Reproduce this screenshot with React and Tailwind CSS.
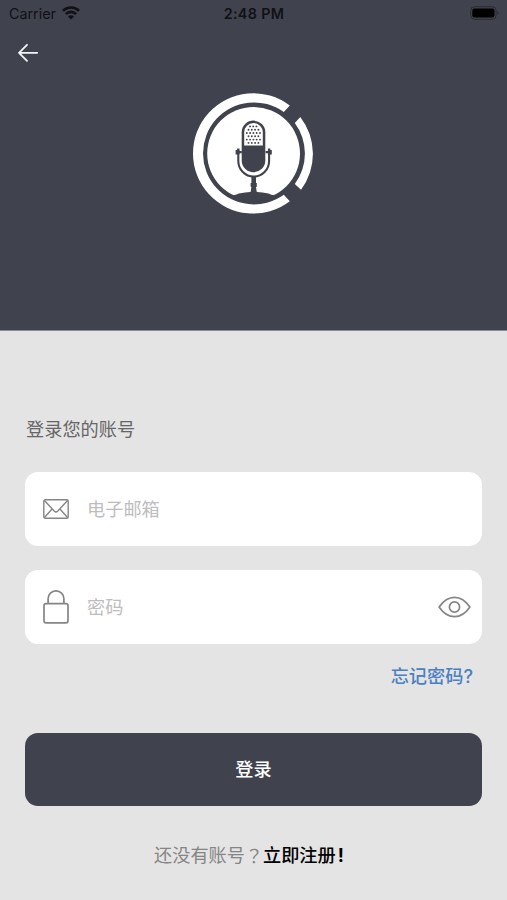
import React from 'react';

const GRILLE_ROWS = [
  { y: 126.4, xs: [249.3, 252.5, 255.7] },
  { y: 129.7, xs: [247.8, 251.1, 254.4, 257.7] },
  { y: 133, xs: [246.1, 249.4, 252.7, 256, 259.3] },
  { y: 136.3, xs: [247.8, 251.1, 254.4, 257.7] },
  { y: 139.6, xs: [246.1, 249.4, 252.7, 256, 259.3] },
  { y: 142.9, xs: [247.8, 251.1, 254.4, 257.7] },
];

function StatusBar() {
  return (
    <div className="flex h-7 items-center justify-between pl-[9px] pr-2 text-[#101116]">
      <div className="flex w-40 items-center gap-[6px]">
        <span className="text-[14.3px] leading-none">Carrier</span>
        <svg width="18" height="14" viewBox="0 0 18 14" fill="none" stroke="currentColor" strokeWidth="2.7" className="-mt-px">
          <path d="M0.9 4.9a11.4 11.4 0 0 1 16.2 0" />
          <path d="M3.9 8.1a7.1 7.1 0 0 1 10.2 0" />
          <path d="M9 13.6 6 10.5a4.2 4.2 0 0 1 6 0Z" fill="currentColor" stroke="none" />
        </svg>
      </div>
      <span className="text-[14.3px] font-semibold leading-none tracking-[0.35px]">2:48 PM</span>
      <div className="flex w-40 justify-end">
        <svg width="29" height="14" viewBox="0 0 29 14" className="-mt-[2px]">
          <rect x="0.7" y="0.7" width="25.4" height="12.6" rx="3.8" fill="none" stroke="#292b33" strokeWidth="1" />
          <rect x="2.3" y="2.4" width="22.2" height="9.2" rx="2.3" fill="#000" />
          <path d="M27.5 5v4q1.2-.5 1.2-2t-1.2-2Z" fill="#292b33" />
        </svg>
      </div>
    </div>
  );
}

function Logo() {
  return (
    <svg width="140" height="140" viewBox="182.6 84 140 140" className="ml-[183px]">
      {/* Outer ring, split in two pieces */}
      <path
        d="M289.4 105.6A60.2 60.2 0 1 0 289.4 201.2L283.4 194.8A51 51 0 1 1 283.4 112Z"
        fill="#fff"
      />
      <path
        d="M299.9 117A60.2 60.2 0 0 1 300.6 189.8L294.4 184A51 51 0 0 0 294.4 123Z"
        fill="#fff"
      />
      <circle cx="253.2" cy="153.4" r="46.4" fill="#fff" />

      {/* Base and stem */}
      <g fill="#40424d">
        <path d="M231.5 195.6Q236 195 238.5 193.6Q245 192 250 191.9H256.6Q262 192 268 193.6Q270.5 195 275 195.6Q265 202 253.3 202Q241 202 231.5 195.6Z" />
        <path d="M251 176h4.6v7h.8v3.4l-.8.8.9 5.2h-6.4l.9-5.2-.8-.8V183h.8Z" />
        <path d="M235.2 150h2.2v1h4v2.2h-4v1.4H235.2ZM271.4 150h-2.2v1h-4v2.2h4v1.4h2.2Z" />
        <path d="M236.7 148.4h2.4v6h-2.4ZM267.5 148.4h2.4v6h-2.4Z" />
      </g>
      <path
        d="M237.9 150V161a15.4 15.6 0 0 0 30.8 0V150"
        fill="none"
        stroke="#40424d"
        strokeWidth="2.1"
      />

      {/* Capsule */}
      <path
        d="M241.3 132.2a11.8 11.6 0 0 1 23.6 0V160.6a11.8 11.6 0 0 1-23.6 0Z"
        fill="#40424d"
      />
      <path d="M243.8 132.2a9.3 9.2 0 0 1 18.6 0V145.6H243.8Z" fill="#fff" />
      {GRILLE_ROWS.map((row) =>
        row.xs.map((x) => <circle key={`${row.y}-${x}`} cx={x + 0.3} cy={row.y} r="0.95" fill="#40424d" />)
      )}
    </svg>
  );
}

function MailIcon() {
  return (
    <svg width="26" height="20" viewBox="0 0 26 20" fill="none" stroke="#858585" strokeWidth="1.4">
      <rect x="0.8" y="0.8" width="24.4" height="18.4" rx="1.5" />
      <path d="M1.2 1.3 11.4 12.2q1.6 1.4 3.2 0L24.8 1.3M1.2 18.7 9.3 9.8M24.8 18.7 16.7 9.8" />
    </svg>
  );
}

function LockIcon() {
  return (
    <svg width="26" height="34" viewBox="0 0 26 34" fill="none" stroke="#858585" strokeWidth="1.7">
      <rect x="1" y="13.6" width="24" height="19.3" rx="2.2" />
      <path d="M5.1 13.6V8.8a7.9 7.9 0 0 1 15.8 0v4.8" />
    </svg>
  );
}

function EyeIcon() {
  return (
    <svg width="33" height="22" viewBox="0 0 33 22" fill="none" stroke="#858585" strokeWidth="1.7" strokeLinejoin="round">
      <path d="M1.1 11C5.2 5 10.4 1.3 16.5 1.3S27.8 5 31.9 11C27.8 17 22.6 20.7 16.5 20.7S5.2 17 1.1 11Z" />
      <circle cx="16.5" cy="11" r="5.1" />
    </svg>
  );
}

export default function App() {
  return (
    <div className="flex h-[900px] w-full flex-col bg-[#e4e4e4] font-['Inter','Noto_Sans_CJK_SC',sans-serif]">
      {/* Header */}
      <header className="h-[331px] shrink-0 border-b border-[#8c8d93] bg-[#40424d]">
        <StatusBar />
        <button className="ml-[18px] mt-[15px] block h-5 w-5">
          <svg width="20" height="20" viewBox="0 0 20 20" fill="none" stroke="#f4f4fa" strokeWidth="1.8" strokeLinecap="round" strokeLinejoin="round">
            <path d="M19.2 9.8H1M9 1.8l-8 8 8 8" />
          </svg>
        </button>
        <div className="mt-[21px]">
          <Logo />
        </div>
      </header>

      {/* Login form */}
      <main className="flex flex-col px-[25px] pt-[84px] text-[18.2px]">
        <h1 className="h-7 pl-px leading-7 text-[#666]">登录您的账号</h1>

        <div className="mt-[29px] flex h-[74px] items-center rounded-[13px] bg-white pl-[18px] pr-[11px]">
          <MailIcon />
          <span className="ml-[18px] mt-px text-[#bdbdbd]">电子邮箱</span>
        </div>

        <div className="mt-6 flex h-[74px] items-center rounded-[13px] bg-white pl-[18px] pr-[11px]">
          <LockIcon />
          <span className="ml-[18px] mt-px flex-1 text-[#bdbdbd]">密码</span>
          <EyeIcon />
        </div>

        <a className="mr-[9px] mt-[18px] h-7 self-end font-medium leading-7 text-[#4a80c2]">忘记密码?</a>

        <button className="mt-[43px] h-[73px] rounded-[13px] bg-[#40424d] pt-px font-medium text-white">登录</button>

        <p className="mt-[35px] flex h-7 whitespace-nowrap pl-[129px] leading-7 text-[#858585]">
          <span>还没有账号</span>
          <span className="w-[18px] text-center font-['Noto_Sans_CJK_TC',sans-serif]" lang="zh-TW">？</span>
          <span className="font-medium text-black">立即注册<span className="ml-[2px] font-bold">!</span></span>
        </p>
      </main>
    </div>
  );
}
